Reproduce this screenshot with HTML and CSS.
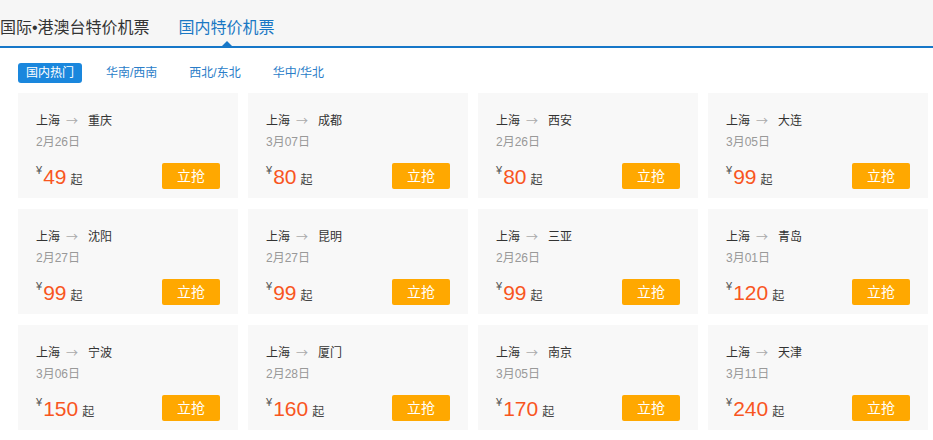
FILE: index.html
```html
<!DOCTYPE html>
<html lang="zh-CN">
<head>
  <meta charset="UTF-8" />
  <meta name="viewport" content="width=device-width, initial-scale=1.0"/>
  <title>特价机票</title>
  <link rel="stylesheet" href="styles.css">
</head>
<body>
  <div class="tab-bar">
    <div class="tab">国际•港澳台特价机票</div>
    <div class="tab active">国内特价机票</div>
  </div>

  <div class="filters">
    <span class="filter on">国内热门</span>
    <span class="filter">华南/西南</span>
    <span class="filter">西北/东北</span>
    <span class="filter">华中/华北</span>
  </div>

  <div id="deals"></div>

  <script>
    const deals = [
      ['重庆', '2月26日', 49], ['成都', '3月07日', 80], ['西安', '2月26日', 80], ['大连', '3月05日', 99],
      ['沈阳', '2月27日', 99], ['昆明', '2月27日', 99], ['三亚', '2月26日', 99], ['青岛', '3月01日', 120],
      ['宁波', '3月06日', 150], ['厦门', '2月28日', 160], ['南京', '3月05日', 170], ['天津', '3月11日', 240]
    ];

    const box = document.getElementById('deals');
    deals.forEach(function (d) {
      const card = document.createElement('div');
      card.className = 'card';
      card.innerHTML =
        '<div class="route">上海<span class="arrow">→</span>' + d[0] + '</div>' +
        '<div class="date">' + d[1] + '</div>' +
        '<div class="bottom">' +
          '<div class="price"><span class="yen">¥</span><span class="num">' + d[2] + '</span><span class="from">起</span></div>' +
          '<a class="buy">立抢</a>' +
        '</div>';
      box.appendChild(card);
    });
  </script>
</body>
</html>
```

FILE: styles.css
```css
* {
  box-sizing: border-box;
}

body {
  margin: 0;
  font-family: 'Liberation Sans', 'Noto Sans CJK SC', sans-serif;
  background: #fff;
  color: #333;
}

.tab-bar {
  display: flex;
  gap: 29px;
  height: 48px;
  background: #f6f6f6;
  border-bottom: 2px solid #1677c8;
}

.tab {
  position: relative;
  font-size: 16px;
  line-height: 20px;
  padding-top: 18px;
  color: #333;
}

.tab.active {
  color: #1a78c4;
}

.tab.active::after {
  content: '';
  position: absolute;
  left: 50%;
  bottom: 0;
  margin-left: -5px;
  border-left: 5px solid transparent;
  border-right: 5px solid transparent;
  border-bottom: 5px solid #1677c8;
}

.filters {
  display: flex;
  gap: 16px;
  margin: 15px 0 10px 18px;
}

.filter {
  font-size: 12px;
  line-height: 20px;
  padding: 0 8px;
  color: #2a7dc8;
  border-radius: 3px;
}

.filter.on {
  background: #1a87dd;
  color: #fff;
}

#deals {
  display: grid;
  grid-template-columns: repeat(4, 220px);
  column-gap: 10px;
  row-gap: 11px;
  padding-left: 18px;
}

.card {
  height: 105px;
  background: #f8f8f8;
  padding: 17px 18px 0;
}

.route {
  display: flex;
  align-items: center;
  font-size: 12px;
  line-height: 20px;
  color: #333;
}

.arrow {
  font-family: 'Noto Sans CJK SC', sans-serif;
  margin: 1px 10px 0 6px;
  color: #aaa;
  font-size: 12px;
}

.date {
  font-size: 12px;
  line-height: 20px;
  margin-top: 1px;
  color: #999;
}

.bottom {
  display: flex;
  justify-content: space-between;
  align-items: center;
  margin-top: 11px;
}

.price {
  display: flex;
  align-items: flex-end;
  height: 26px;
}

.yen {
  align-self: flex-start;
  font-size: 11px;
  line-height: 12px;
  color: #555;
  margin-top: 1px;
}

.num {
  font-size: 21px;
  line-height: 24px;
  color: #f8561f;
  margin-left: 1px;
}

.from {
  font-size: 12px;
  line-height: 18px;
  color: #444;
  margin-left: 4px;
}

.buy {
  width: 58px;
  height: 26px;
  line-height: 26px;
  text-align: center;
  font-size: 14px;
  color: #fff;
  background: #ffa800;
  border-radius: 2px;
  cursor: pointer;
}
```
